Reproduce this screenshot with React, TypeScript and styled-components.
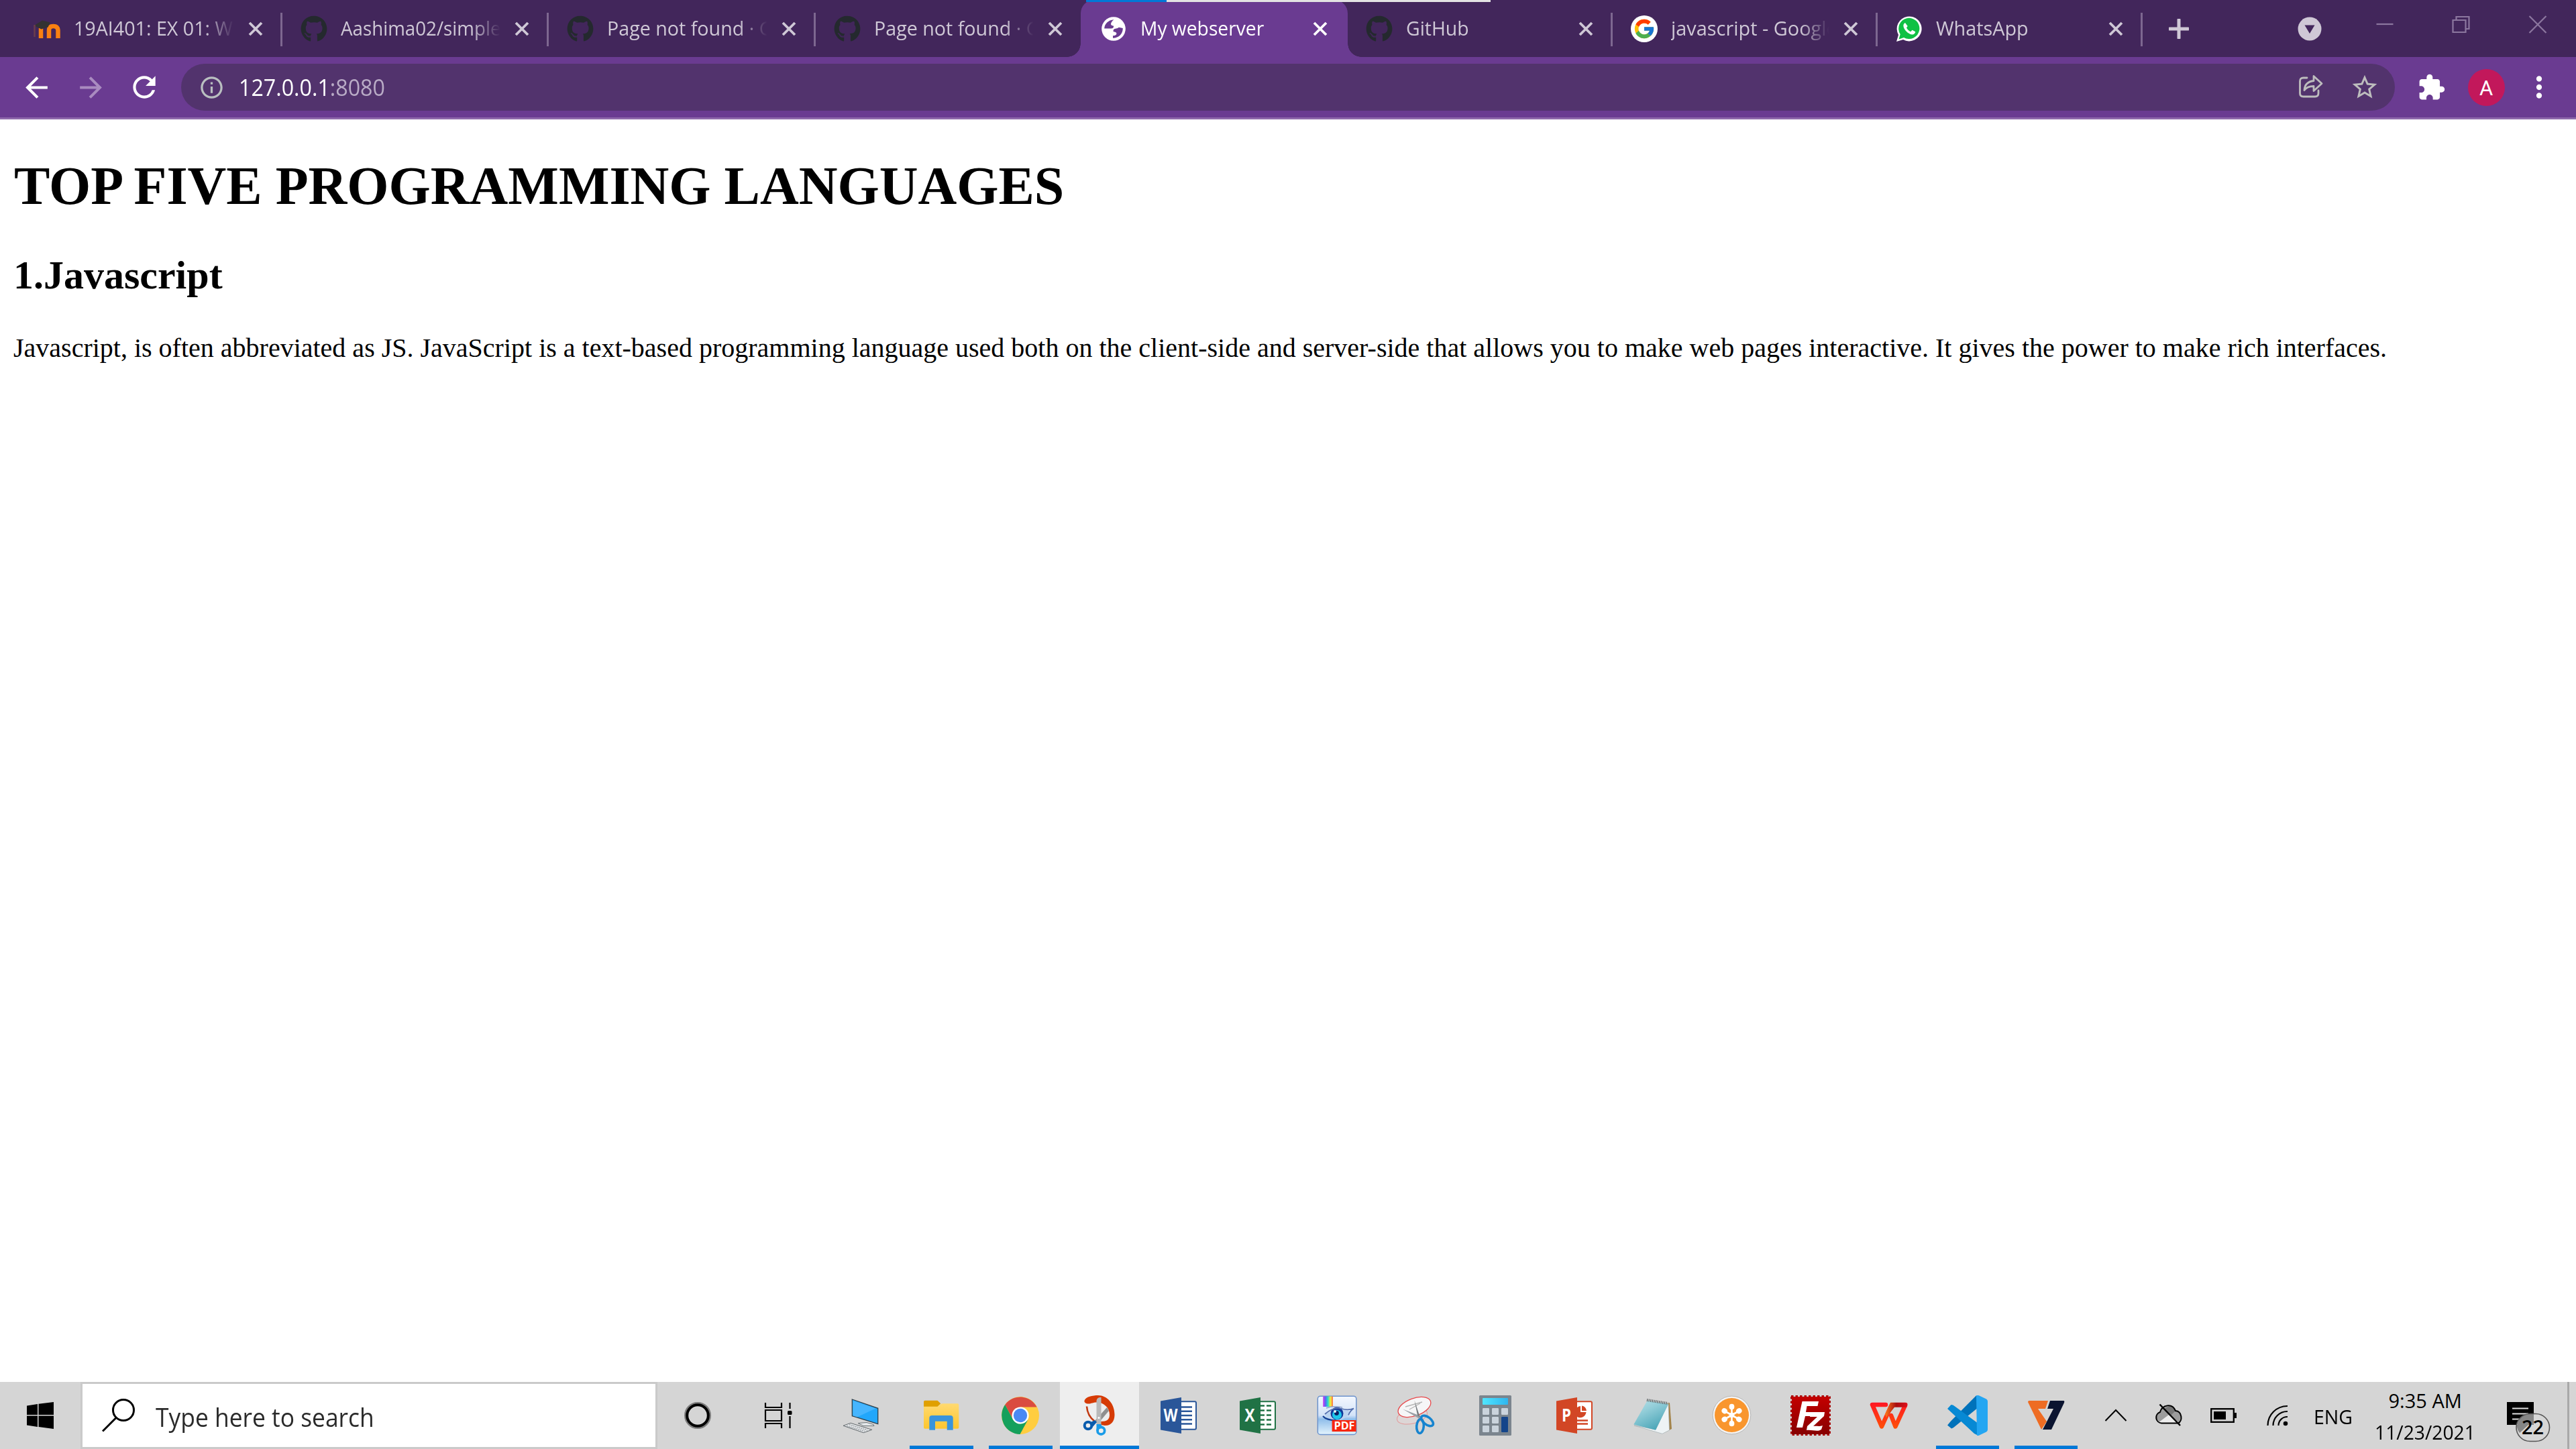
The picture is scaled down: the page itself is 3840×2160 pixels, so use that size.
import React, { useLayoutEffect, useRef, useState } from 'react';
import styled, { createGlobalStyle, css } from 'styled-components';
import { FaGithub } from 'react-icons/fa';
import { FcGoogle } from 'react-icons/fc';
import {
  MdArrowBack,
  MdArrowForward,
  MdRefresh,
  MdInfoOutline,
  MdStarOutline,
  MdExtension,
  MdMoreVert,
} from 'react-icons/md';

const GlobalStyle = createGlobalStyle`
  html, body { margin: 0; padding: 0; background: #fff; overflow: hidden; }
  * { box-sizing: border-box; }
  svg { display: block; flex: none; }
`;

const ui = `"Open Sans", "Noto Sans", sans-serif`;

/* ---------- text condensed to a set width ---------- */

const FitBox = styled.span<{ $w: number }>`
  display: block;
  width: ${(p) => p.$w}px;
  white-space: pre;
`;
const FitInner = styled.span`
  display: inline-block;
  transform-origin: 0 50%;
`;

function Fit({ width, children }: { width: number; children: React.ReactNode }) {
  const ref = useRef<HTMLSpanElement>(null);
  const [scale, setScale] = useState(1);
  useLayoutEffect(() => {
    if (ref.current) setScale(width / ref.current.offsetWidth);
  }, [width]);
  return (
    <FitBox $w={width}>
      <FitInner ref={ref} style={{ transform: `scaleX(${scale})` }}>
        {children}
      </FitInner>
    </FitBox>
  );
}

/* ---------- layout ---------- */

const Screen = styled.div`
  display: flex;
  flex-direction: column;
  width: 3840px;
  height: 2160px;
  background: #fff;
  overflow: hidden;
`;

const TabStrip = styled.div`
  position: relative;
  display: flex;
  height: 85px;
  padding-left: 21px;
  background: #42265b;
  font-family: ${ui};
`;

const LoadBar = styled.div`
  position: absolute;
  left: 1619px;
  top: 0;
  width: 603px;
  height: 3px;
  background: linear-gradient(90deg, #0078d7 120px, #e3e3e3 120px);
`;

const TabItem = styled.div<{ $w: number; $active?: boolean; $line?: boolean; $pad?: number }>`
  position: relative;
  display: flex;
  flex: none;
  align-items: center;
  width: ${(p) => p.$w}px;
  height: 85px;
  padding: 0 ${(p) => (p.$active ? 30 : 27)}px 0 ${(p) => p.$pad ?? 29}px;
  color: ${(p) => (p.$active ? '#fff' : '#cfc8d6')};
  ${(p) =>
    p.$line &&
    css`
      &::after {
        content: '';
        position: absolute;
        right: -2px;
        top: 19px;
        width: 3px;
        height: 50px;
        background: #7d6790;
      }
    `}
  ${(p) =>
    p.$active &&
    css`
      background: #6a3b91;
      border-radius: 20px 20px 0 0;
      &::before,
      &::after {
        content: '';
        position: absolute;
        bottom: 0;
        width: 20px;
        height: 20px;
      }
      &::before {
        left: -20px;
        background: radial-gradient(circle at 0 0, transparent 19.5px, #6a3b91 20px);
      }
      &::after {
        right: -20px;
        background: radial-gradient(circle at 100% 0, transparent 19.5px, #6a3b91 20px);
      }
    `}
`;

const Favicon = styled.div`
  display: flex;
  align-items: center;
  justify-content: center;
  width: 40px;
  height: 40px;
  color: #24292e;
`;

const TabTitle = styled.div`
  flex: 1;
  min-width: 0;
  margin: 0 19px 0 20px;
  overflow: hidden;
  font-size: 29px;
  line-height: 44px;
  padding-bottom: 2px;
  mask-image: linear-gradient(90deg, #000 calc(100% - 45px), transparent 99%);
`;

const WindowButtons = styled.div`
  flex: none;
  color: #8c779f;
`;

const Slot = styled.div<{ $w: number; $color?: string; $nudge?: number }>`
  display: flex;
  flex: none;
  align-items: center;
  justify-content: center;
  width: ${(p) => p.$w}px;
  height: 100%;
  padding-right: ${(p) => p.$nudge ?? 0}px;
  color: ${(p) => p.$color ?? 'inherit'};
`;

const Toolbar = styled.div`
  display: flex;
  align-items: center;
  height: 93px;
  padding: 0 15px;
  background: #6a3b91;
  border-bottom: 3px solid #8e68ab;
  color: #fff;
`;

const Omnibox = styled.div`
  display: flex;
  align-items: center;
  flex: 1;
  height: 70px;
  margin: 0 16px 0 15px;
  padding: 0 5px 0 26px;
  border-radius: 35px;
  background: #52336d;
  color: #bdbdbd;
`;

const Url = styled.div`
  flex: 1;
  margin-left: 21px;
  color: #fff;
  font-family: ${ui};
  font-size: 35px;
  line-height: 60px;
`;
const Port = styled.span`
  color: #b9abc6;
`;

const Avatar = styled.div`
  display: flex;
  align-items: center;
  justify-content: center;
  width: 55px;
  height: 55px;
  border-radius: 50%;
  background: #c2185b;
  color: #fff;
  font: 31px Roboto, sans-serif;
  padding-top: 2px;
`;

const Page = styled.main`
  flex: 1;
  padding: 0 20px;
  color: #000;
  font-family: 'Liberation Serif', serif;
  font-size: 40px;
  h1 {
    margin: 52.6px 0 53.6px 1px;
    font-size: 80px;
    line-height: 92px;
  }
  h2 {
    margin: 0 0 50.8px;
    font-size: 60px;
    line-height: 69px;
  }
  p {
    margin: 0;
    line-height: 46px;
  }
`;

const Taskbar = styled.div`
  display: flex;
  height: 100px;
  background: #d5d5d5;
  color: #000;
  font-family: ${ui};
`;

const SearchBox = styled.div`
  display: flex;
  align-items: center;
  width: 860px;
  height: 100px;
  padding-left: 29px;
  border: 3px solid #cacaca;
  background: #fff;
  color: #2b2b2b;
  font-size: 38px;
  line-height: 60px;
`;
const SearchText = styled.div`
  padding-top: 3px;
  margin-left: 30px;
`;

const AppCell = styled.div<{ $w?: number; $bar?: number; $active?: boolean }>`
  display: flex;
  flex: none;
  align-items: center;
  justify-content: center;
  width: ${(p) => p.$w ?? 118}px;
  height: 100px;
  background-color: ${(p) => (p.$active ? '#eeeeee' : 'transparent')};
  background-image: linear-gradient(#0078d7, #0078d7);
  background-repeat: no-repeat;
  background-position: center bottom;
  background-size: ${(p) => p.$bar ?? 0}px 5px;
`;

const TrayText = styled.div`
  display: flex;
  flex-direction: column;
  align-items: center;
  font-size: 29px;
  line-height: 47px;
  padding-top: 2px;
`;

const ShowDesktop = styled.div`
  flex: 1;
  border-left: 3px solid #a9a9a9;
`;

/* ---------- small browser icons ---------- */

const CloseX = () => (
  <svg width="22" height="22" viewBox="0 0 22 22">
    <path d="M2 2L20 20M20 2L2 20" stroke="currentColor" strokeWidth="3.8" />
  </svg>
);

const Moodle = () => (
  <svg width="40" height="40" viewBox="0 0 40 40">
    <path d="M11 34V19M23 34V22q0-6 6.500-6t7 6v12" fill="none" stroke="#f98012" strokeWidth="6.500" />
    <path d="M1 15L13 7.500l12 3-3.500 7-10 3z" fill="#333232" />
    <path d="M1.500 14v18" stroke="#6b3c4c" strokeWidth="2.500" />
  </svg>
);

const GlobeIcon = () => (
  <svg width="36" height="36" viewBox="0 0 36 36">
    <circle cx="18" cy="18" r="17.800" fill="#fff" />
    <path d="M4.200 17.500C4.500 10.500 10 4.800 18.500 4.200C16 6 14 8.500 14 11c0 1.800 1.800 2.300 3.800 2.600c1 2.400-.8 3.900-3.300 3.900z" fill="#6a3b91" />
    <path d="M31.800 17C32 25.500 26 31.500 17 31.800v-3.600c3.600 0 5.600-1.200 5.400-3.400c-.2-1.800-2-2.300-4.600-2.500c-.8-2.800.8-4.500 4-4.700c1.600-.2 2.600-.6 4-1.800z" fill="#6a3b91" />
  </svg>
);

const WhatsApp = () => (
  <svg width="40" height="40" viewBox="0 0 40 40">
    <path d="M1 39l3-10A18.5 18.5 0 1 1 11 36z" fill="#fff" />
    <path d="M4.500 35.500l2.200-7.500A15.600 15.600 0 1 1 12 33z" fill="#10c144" />
    <path
      d="M14 11c-1.500.5-3 2.500-2.600 5 .7 5 6.600 11.500 12.600 12.500 2.800.3 5-1.500 5.200-4.200l-4.700-2.600-2.200 2.500c-3-1.200-5-3.200-6.300-6l1.700-2.200z"
      fill="#fff"
    />
  </svg>
);

const GoogleMark = () => (
  <svg width="40" height="40" viewBox="0 0 40 40">
    <circle cx="20" cy="20" r="20" fill="#fff" />
    <FcGoogle x={3} y={3} width={34} height={34} size={34} />
  </svg>
);

const ShareIcon = () => (
  <svg width="38" height="38" viewBox="0 0 38 38" fill="none" stroke="currentColor" strokeWidth="2.800" strokeLinejoin="round" strokeLinecap="round">
    <path d="M13 5H7.500q-5 0-5 5v18q0 5 5 5H25q5 0 5-5v-4" />
    <path d="M23 2.500l12 11-12 11v-7c-7 0-11 1.500-14 6 .5-8 5-13 14-14z" />
  </svg>
);

/* ---------- taskbar icons (60 x 60) ---------- */

const Icon = ({ children }: { children: React.ReactNode }) => (
  <svg width="60" height="60" viewBox="0 0 60 60">
    {children}
  </svg>
);

const WindowsLogo = () => (
  <svg width="40" height="40" viewBox="0 0 40 40">
    <path d="M0 5.500L16 3v16H0zM17.500 2.800L40 0v19H17.500zM0 20.500h16V37L0 34.500zM17.500 20.500H40V40l-22.500-3z" />
  </svg>
);

const Magnifier = () => (
  <svg width="50" height="50" viewBox="0 0 50 50" fill="none" stroke="#000" strokeWidth="3">
    <circle cx="32" cy="17" r="15.500" />
    <path d="M21.500 28L1 48.500" />
  </svg>
);

const Cortana = () => (
  <Icon>
    <circle cx="30" cy="30" r="18.500" fill="none" stroke="#7d7d7d" strokeWidth="3" />
    <circle cx="30" cy="30" r="15.800" fill="none" stroke="#000" strokeWidth="4" />
  </Icon>
);

const TaskView = () => (
  <Icon>
    <path d="M10 11v7h24v-7M10 49v-7h24v7M10 22h24v16H10zM46.500 11v9M46.500 31v18" fill="none" stroke="#000" strokeWidth="2.200" />
    <rect x="43" y="23" width="6.500" height="6" rx="1.500" />
  </Icon>
);

const ThisPC = () => (
  <Icon>
    <path d="M26 41.500l8 4 16 0-1-2-10-3z" fill="#e4e8ea" stroke="#6b7478" strokeWidth="1" />
    <path d="M17.300 6l38.400 13.300v23.400l-38.400-12z" fill="#22a7fb" stroke="#30404a" strokeWidth="1.300" />
    <path d="M18.500 8l34 11.500-28 13-6-2z" fill="#56baff" opacity=".7" />
    <path d="M4 45.300l11-4 31.700 10-12.400 4.400z" fill="#e6e8ea" stroke="#5d6468" strokeWidth="1" />
    <path d="M9 45.500l27 8M13 43.500l27 8.500" stroke="#9aa0a4" strokeWidth="1.500" strokeDasharray="2 1" />
  </Icon>
);

const Folder = () => (
  <Icon>
    <defs>
      <linearGradient id="fold" x2="0" y2="1">
        <stop stopColor="#ffda72" />
        <stop offset="1" stopColor="#fdc62e" />
      </linearGradient>
    </defs>
    <path d="M4 16h21l6-3.700h23.500q1.800 0 1.800 1.800V48q0 1.700-1.800 1.700H5.700Q4 49.700 4 48z" fill="url(#fold)" />
    <path d="M4 9.500q0-1.800 1.800-1.800h18.700l4.800 4.600-4.800 4.400H4z" fill="#e0a000" />
    <path d="M12.300 51.700V34q0-4 4-4h27.400q4 0 4 4v17.700h-9v-13H21v13z" fill="#3994dc" />
  </Icon>
);

const Chrome = () => (
  <Icon>
    <circle cx="30" cy="30" r="28" fill="#ffcd40" />
    <path d="M30 30V17.500H54.600A28 28 0 0 0 7.200 14L19 36z" fill="#da4b40" />
    <path d="M7.200 14A28 28 0 0 0 29.500 58l11.500-21L30 42.500 19 36z" fill="#14a05c" />
    <circle cx="30" cy="30" r="12.600" fill="#fff" />
    <circle cx="30" cy="30" r="10.200" fill="#4a89f4" />
  </Icon>
);

const SnipSketch = () => (
  <Icon>
    <path
      d="M7.500 8C9 2 20 0 28 0c13 0 24.500 12 24.500 29C52.500 39 47 45 39 45c-4 0-7-1-7-2v-4c9 0 13-3 13-10C45 18 36 10.500 26 10.500c-6 0-8 2-12.500 2-4 0-6.500-2-6-4.500z"
      fill="#d63b05"
    />
    <path d="M11 16.500q1 14 11.500 22" fill="none" stroke="#c23a12" strokeWidth="2.600" />
    <path d="M41 18l3 5-16 19-6-3z" fill="#8f8f8f" />
    <path d="M25.500 8q1-5.500 7-5v40h-7z" fill="#b9b9b9" />
    <path d="M23 37l3 3-7 8-4-7z" fill="#0a5cad" />
    <circle cx="13" cy="45" r="5.300" fill="none" stroke="#0a5cad" strokeWidth="4" />
    <path d="M25.500 43h7l2 6-9 4z" fill="#1b9ce8" />
    <circle cx="32.300" cy="52.700" r="5.200" fill="none" stroke="#1b9ce8" strokeWidth="4" />
    <circle cx="32.300" cy="52.700" r="3.300" fill="#eee" />
    <circle cx="29" cy="33.500" r="1.500" fill="#fff" />
  </Icon>
);

const Letter = styled.text`
  font-family: 'Open Sans', sans-serif;
  font-weight: 700;
  fill: #fff;
`;

const Office = ({ color, letter, children, w }: { color: string; letter: string; children: React.ReactNode; w: number }) => (
  <Icon>
    <rect x="30" y="9.300" width="26" height="41.500" rx="2" fill="#fff" stroke={color} strokeWidth="2" />
    {children}
    <path d="M3 8.500L34 3v54L3 51.500z" fill={color} />
    <Letter x={18 - w / 2} y="38.500" fontSize="26" textLength={w} lengthAdjust="spacingAndGlyphs">
      {letter}
    </Letter>
  </Icon>
);

const Word = () => (
  <Office color="#2a5699" letter="W" w={21}>
    <path d="M34 17.500h16M34 23.700h16M34 30h16M34 36.200h16M34 42.500h16" stroke="#2a5699" strokeWidth="2.600" />
  </Office>
);
const Excel = () => (
  <Office color="#207245" letter="X" w={15}>
    <path d="M34 15.500h16M34 22.500h16M34 29.500h16M34 36.500h16M34 43.500h16" stroke="#207245" strokeWidth="2.500" />
    <path d="M41.500 14v31" stroke="#fff" strokeWidth="3" />
  </Office>
);
const PowerPoint = () => (
  <Office color="#d24625" letter="P" w={14}>
    <path d="M34 18q3-2 5-2v9h8.500A9 9 0 0 1 34 32z" fill="#d24625" />
    <path d="M41 15.500a8 8 0 0 1 7 7.500h-7z" fill="#d24625" />
    <path d="M34 37.500h16M34 42.500h16" stroke="#d24625" strokeWidth="2.400" />
  </Office>
);

const PdfViewer = () => (
  <Icon>
    <defs>
      <linearGradient id="pdfbg" x2="0" y2="1">
        <stop stopColor="#f4f8ff" />
        <stop offset=".5" stopColor="#d3e3f8" />
        <stop offset=".6" stopColor="#8fbdea" />
        <stop offset="1" stopColor="#e4f4fd" />
      </linearGradient>
      <linearGradient id="rainbow">
        <stop stopColor="#d53bf0" />
        <stop offset=".25" stopColor="#5468f5" />
        <stop offset=".5" stopColor="#27e0c8" />
        <stop offset=".75" stopColor="#f4ef3a" />
        <stop offset="1" stopColor="#fb6a4a" />
      </linearGradient>
    </defs>
    <rect x="1.300" y="1.200" width="57.500" height="57.300" rx="4" fill="url(#pdfbg)" stroke="#6c93cd" strokeWidth="1.500" />
    <rect x="9.200" y="1.500" width="14.800" height="15.500" fill="url(#rainbow)" />
    <path d="M12 29q14-13 38-5-7 13-20 13-12 0-18-8z" fill="#bcd4f0" />
    <circle cx="30" cy="27" r="9.500" fill="#12399a" />
    <circle cx="30" cy="29" r="7" fill="#1cc7ea" />
    <circle cx="29.500" cy="26.500" r="3.400" fill="#0c1e63" />
    <circle cx="27" cy="24" r="2" fill="#e8fbff" />
    <path d="M12 28q12-11 25-8 10 3 18-.5-5 3-8 10" fill="none" stroke="#5570ae" strokeWidth="1.800" />
    <path d="M9 31q5 6 20 6.500" fill="none" stroke="#143f93" strokeWidth="2" />
    <path d="M14 19q10-4 24-1" fill="none" stroke="#8ba2cc" strokeWidth="1.500" />
    <rect x="22.600" y="37" width="36" height="17" fill="#f7260e" />
    <Letter x="25.500" y="51" fontSize="15.500" textLength="31" lengthAdjust="spacingAndGlyphs">
      PDF
    </Letter>
  </Icon>
);

const SnippingTool = () => (
  <Icon>
    <ellipse cx="24" cy="31" rx="23" ry="11" transform="rotate(-14 24 31)" fill="#ddd6d6" stroke="#e29a9a" />
    <ellipse cx="27.500" cy="17.500" rx="25.500" ry="13" transform="rotate(-20 27.500 17.500)" fill="#f6f6f7" stroke="#e8494c" strokeWidth="1.300" />
    <path d="M14 17l25-7M20 21l16-9" stroke="#b5b5b5" strokeWidth="1.300" />
    <path d="M10 20.500L37 31l-2 4z" fill="#9aa0a6" />
    <path d="M27.500 7.500L36 33l-4-3z" fill="#777c80" />
    <ellipse cx="36" cy="46" rx="5.300" ry="10.500" transform="rotate(4 36 46)" fill="none" stroke="#1784cf" strokeWidth="3.600" />
    <ellipse cx="46.500" cy="38" rx="10.500" ry="5.500" transform="rotate(38 46.500 38)" fill="none" stroke="#1784cf" strokeWidth="3.600" />
  </Icon>
);

const Calculator = () => (
  <Icon>
    <defs>
      <linearGradient id="lcd">
        <stop stopColor="#50e6ff" />
        <stop offset="1" stopColor="#2fb5ee" />
      </linearGradient>
    </defs>
    <rect x="6" width="48" height="60" rx="1.500" fill="#7b858e" />
    <rect x="11" y="4" width="38" height="10" rx="1" fill="url(#lcd)" />
    {[
      [11, 19], [25, 19], [39, 19], [11, 32], [25, 32], [11, 45], [25, 45],
    ].map(([x, y]) => (
      <rect key={`${x}-${y}`} x={x} y={y} width="10" height="10" rx="1.300" fill="#cad3dc" />
    ))}
    <rect x="39" y="32" width="10" height="23" rx="1.300" fill="#14458a" />
  </Icon>
);

const Notepad = () => (
  <Icon>
    <defs>
      <linearGradient id="note" x2=".6" y2="1">
        <stop stopColor="#b9e1e8" />
        <stop offset=".4" stopColor="#92cdd8" />
        <stop offset="1" stopColor="#4ba6b8" />
      </linearGradient>
    </defs>
    <path d="M50 12l4-1 3 39-12 6z" fill="#a3834a" />
    <path d="M52 12l1.500 40L43 57.300 1 45l32 6z" fill="#eef3f5" stroke="#9aa7ab" strokeWidth=".6" />
    <path d="M20.500 8L52 13 33 51.700 .3 43.500z" fill="url(#note)" />
    <path d="M20 7l31 5" stroke="#5b6264" strokeWidth="4" strokeDasharray="1.300 1.300" />
  </Icon>
);

const Flower = () => (
  <Icon>
    <circle cx="29.500" cy="29.500" r="28.300" fill="#f4f4f4" stroke="#aaa" strokeWidth=".8" />
    <circle cx="29.500" cy="29.500" r="25.500" fill="#f9962e" />
    {[0, 60, 120, 180, 240, 300].map((a) => (
      <g key={a} transform={`rotate(${a} 29.500 29.500)`}>
        <path d="M29.500 29.500V17" stroke="#fff" strokeWidth="2.600" />
        <ellipse cx="29.500" cy="17" rx="3.900" ry="4.300" fill="#fff" />
      </g>
    ))}
    <circle cx="29.500" cy="29.500" r="3.800" fill="#fff" />
  </Icon>
);

const FileZilla = () => (
  <Icon>
    <defs>
      <linearGradient id="fz" x2="0" y2="1">
        <stop stopColor="#c40000" />
        <stop offset="1" stopColor="#860000" />
      </linearGradient>
    </defs>
    <rect x="1" y="1" width="58" height="58" fill="none" stroke="#a80000" strokeWidth="2" strokeDasharray="3.500 3" />
    <rect x="2" y="2" width="56" height="56" fill="url(#fz)" />
    <path d="M17.500 9H42l-1.500 7H24.500L23 25h11l-1 6H22l-4 17H9z" fill="#fff" />
    <path d="M31 25h20l-1 6-16 15c5-1 8 1 14-1l-2 6c-6 4-13 0-22 1l1-6 15-14H29z" fill="#fff" />
  </Icon>
);

const Wps = () => (
  <Icon>
    <defs>
      <linearGradient id="wps" gradientUnits="userSpaceOnUse" x1="0" y1="10" x2="0" y2="50">
        <stop stopColor="#ff1524" />
        <stop offset="1" stopColor="#ff5207" />
      </linearGradient>
      <linearGradient id="wpsTop">
        <stop stopColor="#ff7a1a" />
        <stop offset=".5" stopColor="#a80d10" />
        <stop offset="1" stopColor="#e0101c" />
      </linearGradient>
    </defs>
    <path d="M5 14h20M5 14L19 46.500 33 16" fill="none" stroke="url(#wps)" strokeWidth="6.500" strokeLinejoin="round" strokeLinecap="round" />
    <path d="M33 30L39.500 46.500 54 15" fill="none" stroke="url(#wps)" strokeWidth="6.500" strokeLinejoin="round" strokeLinecap="round" />
    <path d="M32 10.800h22q4.500 0 3.200 4.200l-1 2.700H38L26 33l-2-5z" fill="url(#wpsTop)" />
  </Icon>
);

const VsCode = () => (
  <Icon>
    <path d="M43 .3L5.500 38 0 44.500l6 5q3-1 5-3L46 18z" fill="#0072ba" />
    <path d="M0 20l5.500-6q3 0 5 2L46 42v18L40 57z" fill="#0789d4" />
    <path d="M43 .3q2-1 4 0L58 5.500q2 1 2 3.500v42q0 2.500-2 3.500l-11 5.200q-2 1-3 .3z" fill="#24a6f2" />
  </Icon>
);

const V7 = () => (
  <Icon>
    <path d="M3 10q0-2 2-2h28l-4 12H18l13 19-8 12z" fill="#ee6c23" />
    <path d="M36 8h20q2 0 1 3L38 51H25l16-31h-9z" fill="#0b1430" />
  </Icon>
);

/* ---------- tray icons ---------- */

const Chevron = () => (
  <svg width="34" height="20" viewBox="0 0 34 20">
    <path d="M1.500 18L17 2l15.500 16" fill="none" stroke="#000" strokeWidth="2" />
  </svg>
);

const CloudOff = () => (
  <svg width="42" height="36" viewBox="0 0 42 36">
    <path d="M10 29a8 8 0 0 1-2-16C10 4 25-1 31 11c9 1 11 14 4 18z" fill="#9c9c9c" />
    <path d="M14 10C18 2 29 4 31 11l-8 8z" fill="#777" />
    <path d="M5 29l16-12 16 12z" fill="#ededed" />
    <path d="M10 29.500a8.500 8.500 0 0 1-2-16.500C11 2 26-1 31 11c10 1 11 15 4 18.500z" fill="none" stroke="#000" strokeWidth="2" />
    <path d="M7.500 1.500L38 33" stroke="#000" strokeWidth="2.500" />
  </svg>
);

const Battery = () => (
  <svg width="39" height="24" viewBox="0 0 39 24">
    <rect x="1.200" y="2.200" width="33.600" height="19.600" fill="none" stroke="#000" strokeWidth="2.300" />
    <path d="M5 6h18v12H5zM35 8h4v8h-4z" />
  </svg>
);

const Wifi = () => (
  <svg width="32" height="32" viewBox="0 0 32 32" fill="none" stroke="#000" strokeWidth="2.200">
    <path d="M1.500 31A29 29 0 0 1 31 2M9.500 31A21 21 0 0 1 31 10M17.500 31A13 13 0 0 1 31 18" />
    <circle cx="28" cy="28" r="2.200" fill="#000" />
  </svg>
);

const ActionCenter = () => (
  <svg width="80" height="100" viewBox="0 0 80 100">
    <path d="M12 30h40v34H12z" />
    <path d="M20 39.500h24M20 47.500h24M20 55.500h18" stroke="#ddd" strokeWidth="2" />
    <rect x="26" y="47.500" width="49.500" height="41" rx="20.500" fill="#d6d6d6" />
    <path d="M27.500 64Q31 48 46 47.500h6V64z" fill="#858585" />
    <path d="M26.500 64H44L31 76q-4-5-4.500-12z" fill="#858585" />
    <rect x="26" y="47.500" width="49.500" height="41" rx="20.500" fill="none" stroke="#555" strokeWidth="1.600" />
    <text x="34" y="78" fontFamily="Open Sans, sans-serif" fontSize="29" fontWeight="600" textLength="33" lengthAdjust="spacingAndGlyphs">
      22
    </text>
  </svg>
);

/* ---------- content ---------- */

const github = <FaGithub size={40} />;

const tabs = [
  { w: 397.5, icon: <Moodle />, title: '19AI401: EX 01: W', tw: 237, line: true },
  { w: 397.5, icon: github, title: 'Aashima02/simple', tw: 238, line: true },
  { w: 397.5, icon: github, title: 'Page not found · G', tw: 248, line: true },
  { w: 397.5, icon: github, title: 'Page not found · G', tw: 248, line: false },
  { w: 397.5, icon: <GlobeIcon />, title: 'My webserver', tw: 184, active: true },
  { w: 393, icon: github, title: 'GitHub', tw: 94, line: true, pad: 27 },
  { w: 395, icon: <GoogleMark />, title: 'javascript - Google', tw: 248, line: true },
  { w: 395, icon: <WhatsApp />, title: 'WhatsApp', tw: 138, line: true },
];

const apps = [
  { icon: <Folder />, bar: 95 },
  { icon: <Chrome />, bar: 95 },
  { icon: <SnipSketch />, bar: 118, active: true },
  { icon: <Word /> },
  { icon: <Excel /> },
  { icon: <PdfViewer /> },
  { icon: <SnippingTool /> },
  { icon: <Calculator /> },
  { icon: <PowerPoint /> },
  { icon: <Notepad />, w: 117 },
  { icon: <Flower />, w: 117 },
  { icon: <FileZilla />, w: 117 },
  { icon: <Wps />, w: 117 },
  { icon: <VsCode />, bar: 94, w: 117 },
  { icon: <V7 />, bar: 94, w: 117 },
];

export default function App() {
  return (
    <Screen>
      <GlobalStyle />
      <TabStrip>
        {tabs.map((t, i) => (
          <TabItem key={i} $w={t.w} $active={t.active} $line={t.line} $pad={t.pad}>
            <Favicon>{t.icon}</Favicon>
            <TabTitle>
              <Fit width={t.tw}>{t.title}</Fit>
            </TabTitle>
            <CloseX />
          </TabItem>
        ))}
        <Slot $w={112} $color="#cfc8d6">
          <svg width="30" height="30" viewBox="0 0 30 30">
            <path d="M15 1.500v27M1.500 15h27" stroke="currentColor" strokeWidth="5" strokeLinecap="round" />
          </svg>
        </Slot>
        <Slot $w={96} />
        <Slot $w={86} $color="#cfc8d6">
          <svg width="36" height="36" viewBox="0 0 36 36">
            <circle cx="18" cy="18" r="17.500" fill="currentColor" />
            <path d="M10.500 12.500h15L18 25z" fill="#42265b" />
          </svg>
        </Slot>
        <WindowButtons>
          <svg width="350" height="73" viewBox="0 0 350 73" fill="none" stroke="currentColor" strokeWidth="2.200">
            <path d="M56.500 36h25" />
            <path d="M170.500 30h19v18h-19zM175.500 30v-5h19v18h-5" />
            <path d="M284.500 24l25 25M309.500 24l-25 25" />
          </svg>
        </WindowButtons>
        <LoadBar />
      </TabStrip>

      <Toolbar>
        <Slot $w={80} $nudge={2}><MdArrowBack size={49} /></Slot>
        <Slot $w={80} $color="#a98bc0"><MdArrowForward size={49} /></Slot>
        <Slot $w={80}><MdRefresh size={50} /></Slot>
        <Omnibox>
          <MdInfoOutline size={39} color="#b9bfc0" />
          <Url>
            <Fit width={218}>
              127.0.0.1<Port>:8080</Port>
            </Fit>
          </Url>
          <Slot $w={80}><ShareIcon /></Slot>
          <Slot $w={80}><MdStarOutline size={44} /></Slot>
        </Omnibox>
        <Slot $w={80} $nudge={4}><MdExtension size={43} /></Slot>
        <Slot $w={80}><Avatar>A</Avatar></Slot>
        <Slot $w={79} $nudge={2}><MdMoreVert size={50} /></Slot>
      </Toolbar>

      <Page>
        <h1>TOP FIVE PROGRAMMING LANGUAGES</h1>
        <h2>1.Javascript</h2>
        <p>
          Javascript, is often abbreviated as JS. JavaScript is a text-based programming language used both on the
          client-side and server-side that allows you to make web pages interactive. It gives the power to make rich
          interfaces.
        </p>
      </Page>

      <Taskbar>
        <Slot $w={120}><WindowsLogo /></Slot>
        <SearchBox>
          <Magnifier />
          <SearchText>
            <Fit width={326}>Type here to search</Fit>
          </SearchText>
        </SearchBox>
        <AppCell $w={120}><Cortana /></AppCell>
        <AppCell $w={122}><TaskView /></AppCell>
        <AppCell $w={122}><ThisPC /></AppCell>
        {apps.map((a, i) => (
          <AppCell key={i} $w={a.w} $bar={a.bar} $active={a.active}>{a.icon}</AppCell>
        ))}
        <Slot $w={91}><Chevron /></Slot>
        <Slot $w={68}><CloudOff /></Slot>
        <Slot $w={94}><Battery /></Slot>
        <Slot $w={68}><Wifi /></Slot>
        <Slot $w={98}>
          <TrayText>
            <Fit width={58}>ENG</Fit>
          </TrayText>
        </Slot>
        <Slot $w={176}>
          <TrayText>
            <Fit width={109}>9:35 AM</Fit>
            <Fit width={150}>11/23/2021</Fit>
          </TrayText>
        </Slot>
        <Slot $w={124}><ActionCenter /></Slot>
        <ShowDesktop />
      </Taskbar>
    </Screen>
  );
}
